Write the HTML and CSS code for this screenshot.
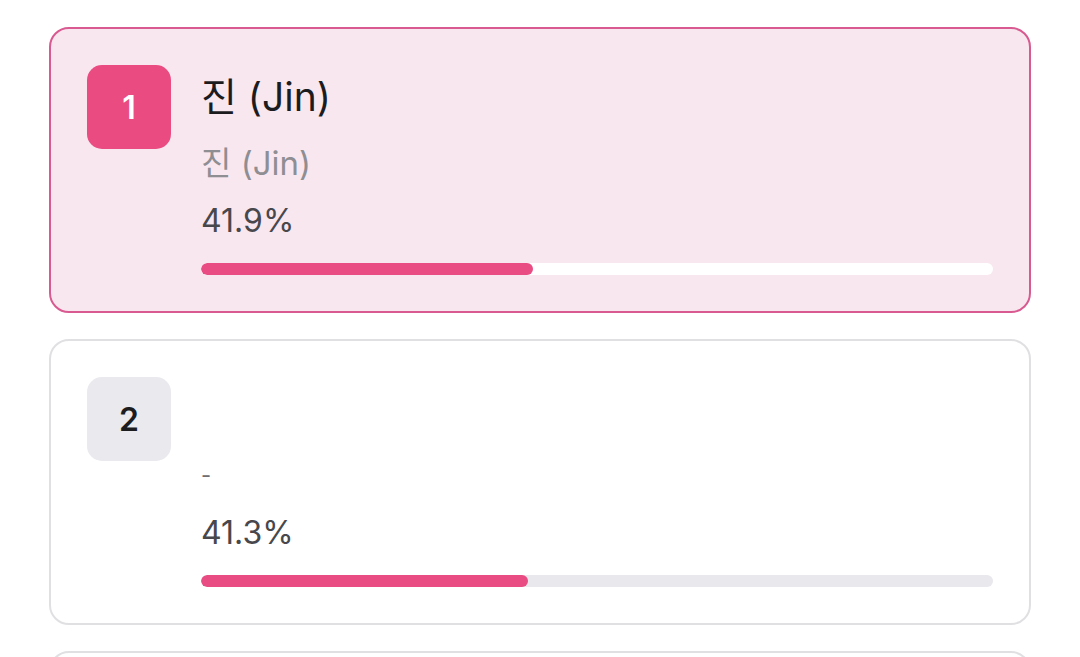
FILE: index.html
```html
<!DOCTYPE html>
<html lang="ko">
<head>
<meta charset="utf-8">
<title>Ranking</title>
<link rel="stylesheet" href="styles.css">
</head>
<body>
<div class="list">
  <div class="card card-top">
    <div class="badge badge-top">1</div>
    <div class="info">
      <div class="title">진 (Jin)</div>
      <div class="subtitle">진 (Jin)</div>
      <div class="percent">41.9%</div>
      <div class="track track-top"><div class="fill" style="width:41.9%"></div></div>
    </div>
  </div>
  <div class="card">
    <div class="badge">2</div>
    <div class="info">
      <div class="title"></div>
      <div class="subtitle subtitle-dash">-</div>
      <div class="percent">41.3%</div>
      <div class="track"><div class="fill" style="width:41.3%"></div></div>
    </div>
  </div>
  <div class="card">
    <div class="badge"></div>
    <div class="info">
      <div class="title"></div>
      <div class="subtitle"></div>
      <div class="percent"></div>
      <div class="track"></div>
    </div>
  </div>
</div>
</body>
</html>
```

FILE: styles.css
```css
* { box-sizing: border-box; }
html, body { margin: 0; padding: 0; background: #ffffff; }
body {
  font-family: Inter, "Noto Sans CJK KR", "Noto Sans", sans-serif;
  color: #1c1c1e;
}
.list {
  display: flex;
  flex-direction: column;
  gap: 26px;
  padding: 27px 49px;
}
.card {
  display: flex;
  align-items: flex-start;
  gap: 30px;
  padding: 36px;
  border: 2px solid #e0e0e3;
  border-radius: 20px;
  background: #ffffff;
}
.card-top {
  background: #f9e7f0;
  border-color: #d85a90;
}
.badge {
  flex: 0 0 84px;
  width: 84px;
  height: 84px;
  border-radius: 15px;
  background: #e9e9ee;
  color: #1c1c1e;
  display: flex;
  align-items: center;
  justify-content: center;
  font-size: 32px;
  font-weight: 600;
}
.badge-top {
  background: #ea4c82;
  color: #ffffff;
}
.info {
  flex: 1;
  display: flex;
  flex-direction: column;
}
.title {
  font-size: 39px;
  line-height: 64px;
  height: 64px;
  color: #1c1c1e;
}
.subtitle {
  margin-top: 14px;
  font-size: 33px;
  line-height: 40px;
  height: 40px;
  color: #8e8e93;
}
.subtitle-dash {
  font-size: 22px;
  color: #6e6e73;
}
.percent {
  margin-top: 18px;
  font-size: 32px;
  line-height: 40px;
  height: 40px;
  color: #48484c;
}
.track {
  margin-top: 22px;
  height: 12px;
  border-radius: 6px;
  background: #e8e8ed;
  overflow: hidden;
}
.track-top { background: #ffffff; }
.fill {
  height: 100%;
  border-radius: 6px;
  background: #e94c82;
}
```
